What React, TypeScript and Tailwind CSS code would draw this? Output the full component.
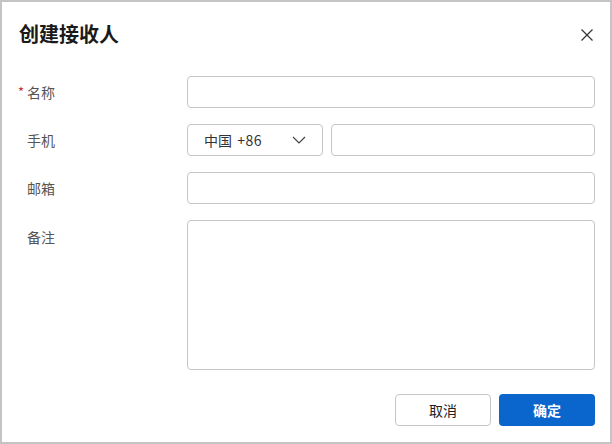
import React from "react";

const font = { fontFamily: '"Noto Sans CJK SC", "Noto Sans", sans-serif' };

function Row({ label, required, children, top }: { label: string; required?: boolean; children: React.ReactNode; top?: boolean }) {
  return (
    <div className={`flex ${top ? "items-start" : "items-center"}`}>
      <div className={`w-[169px] shrink-0 flex items-center text-[14px] text-[#555] leading-[20px] ${top ? "pt-[7px]" : ""}`}>
        <span className="w-[9px] text-[#d0302f] text-[13px] leading-[12px] -mt-[1px]">{required ? "*" : ""}</span>
        <span>{label}</span>
      </div>
      {children}
    </div>
  );
}

export default function App() {
  return (
    <div style={font} className="w-[612px] h-[444px] border-2 border-[#c4c4c4] bg-white flex flex-col">
      <div className="flex items-center justify-between pl-[17px] pr-[16px] pt-[17px] h-[47px]">
        <div className="text-[20px] font-bold text-[#1a1a1a] leading-[28px]">创建接收人</div>
        <svg width="14" height="14" viewBox="0 0 14 14" className="mt-[2px]">
          <path d="M1.5 1.5 L12.5 12.5 M12.5 1.5 L1.5 12.5" stroke="#333" strokeWidth="1.2" fill="none" />
        </svg>
      </div>
      <div className="flex flex-col gap-[16px] pl-[16px] pr-[15px] pt-[27px]">
        <Row label="名称" required>
          <div className="flex-1 h-[32px] border border-[#c6c6c6] rounded-[4px]" />
        </Row>
        <Row label="手机">
          <div className="flex-1 flex gap-[8px]">
            <div className="w-[136px] h-[32px] border border-[#c6c6c6] rounded-[4px] flex items-center justify-between pl-[16px] pr-[16px] text-[14px] text-[#333]">
              <span>中国 <span className="ml-[2px] tracking-[0.5px]">+86</span></span>
              <svg width="14" height="8" viewBox="0 0 14 8">
                <path d="M1 1 L7 7 L13 1" stroke="#444" strokeWidth="1.2" fill="none" />
              </svg>
            </div>
            <div className="flex-1 h-[32px] border border-[#c6c6c6] rounded-[4px]" />
          </div>
        </Row>
        <Row label="邮箱">
          <div className="flex-1 h-[32px] border border-[#c6c6c6] rounded-[4px]" />
        </Row>
        <Row label="备注" top>
          <div className="flex-1 h-[150px] border border-[#c6c6c6] rounded-[4px]" />
        </Row>
      </div>
      <div className="flex justify-end gap-[8px] pr-[15px] pt-[24px]">
        <button className="w-[96px] h-[32px] border border-[#c6c6c6] rounded-[4px] text-[14px] text-[#222] bg-white">取消</button>
        <button className="w-[96px] h-[32px] rounded-[4px] text-[14px] text-white font-bold bg-[#0a66cc]">确定</button>
      </div>
    </div>
  );
}
